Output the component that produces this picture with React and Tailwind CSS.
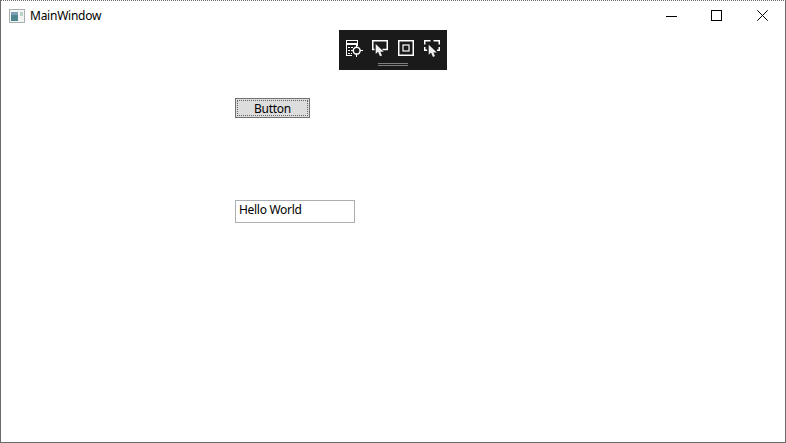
import React from "react";

function DocIcon() {
  return (
    <svg width="18" height="18" viewBox="0 0 18 18" fill="none" stroke="#fff" strokeWidth="1" shapeRendering="crispEdges">
      <path d="M0.5 15V0.5H11.5V6" />
      <path d="M0 3.5H12" strokeWidth="2" />
      <path d="M0 15.5H6" />
      <path d="M2 7.5H4M5 7.5H7M2 10.5H4M2 13.5H4M5 13.5H6" />
      <circle cx="10.7" cy="10.7" r="3.4" shapeRendering="auto" strokeWidth="1.5" />
      <path d="M10.5 5V8M10.5 13.5V16.5M5 10.5H8M13.5 10.5H16.5" strokeWidth="1.2" />
    </svg>
  );
}

function ScreenCursorIcon() {
  return (
    <svg width="18" height="18" viewBox="0 0 18 18" fill="none">
      <path d="M2.5 9.5H0.75V0.75H15.25V9.5H10.5" stroke="#fff" strokeWidth="1.5" />
      <path d="M3.7 4V14L6 11.8L8 16.3L10 15.4L8.3 11.8L11.8 11.8Z" fill="#f0f0f0" />
    </svg>
  );
}

function SquareIcon() {
  return (
    <svg width="18" height="18" viewBox="0 0 18 18" fill="none" stroke="#fff">
      <rect x="0.75" y="0.75" width="14.5" height="14.5" strokeWidth="1.5" />
      <rect x="5" y="5" width="6" height="6" strokeWidth="1.2" />
    </svg>
  );
}

function BracketCursorIcon() {
  return (
    <svg width="18" height="18" viewBox="0 0 18 18" fill="none">
      <path d="M0.75 4.5V0.75H6.5M9.5 0.75H15.25V4.5M0.75 7V10.25H3.2M13 10.25H15.25V7" stroke="#fff" strokeWidth="1.5" />
      <path d="M4.7 4.7V14.7L7 12.5L9 17L11 16.1L9.3 12.5L12.8 12.5Z" fill="#f0f0f0" />
    </svg>
  );
}

export default function App() {
  return (
    <div className="relative flex h-[443px] w-[786px] flex-col border border-[#6a6a6a] [border-top-style:dotted] bg-white font-['Noto_Sans','Open_Sans',sans-serif] text-[12px] text-black">
      <header className="flex h-[29px] shrink-0 items-center">
        <svg className="ml-[8px]" width="16" height="14" viewBox="0 0 16 14">
          <rect x="0.5" y="0.5" width="15" height="13" fill="#f2f4f4" stroke="#a9b0b3" />
          <rect x="2" y="3" width="7" height="9" fill="#4f8791" />
          <rect x="2" y="3" width="7" height="3" fill="#7d9fb5" />
          <rect x="11" y="3" width="3" height="4" fill="#b9d3c9" />
        </svg>
        <span className="ml-[5px] leading-none tracking-[-0.25px]">MainWindow</span>
        <div className="ml-auto flex">
          <button className="flex h-[29px] w-[45px] items-center justify-center">
            <span className="mt-px h-px w-[11px] bg-black" />
          </button>
          <button className="flex h-[29px] w-[45px] items-center justify-center">
            <span className="h-[11px] w-[11px] border border-black" />
          </button>
          <button className="ml-px flex h-[29px] w-[45px] items-center justify-center">
            <svg width="11" height="11" viewBox="0 0 11 11" stroke="#000" strokeWidth="1">
              <path d="M0.3 0.3L10.7 10.7M10.7 0.3L0.3 10.7" />
            </svg>
          </button>
        </div>
      </header>

      <main className="flex flex-col items-start pl-[234px] pt-[68px]">
        <button className="h-[20px] w-[75px] border border-[#707070] bg-[#dddddd] p-px">
          <span className="flex h-full w-full items-center justify-center border border-dotted border-[#666666] pt-px leading-none tracking-[-0.3px]">
            Button
          </span>
        </button>
        <div className="mt-[82px] flex h-[23px] w-[120px] items-center border border-[#abadb3] bg-white pb-[3px] pl-[3px] leading-none tracking-[-0.3px]">
          Hello World
        </div>
      </main>

      <div className="absolute left-[338px] top-[29px] flex h-[40px] w-[108px] flex-col items-center bg-[#1a1a1a]">
        <div className="flex w-full gap-[8px] pl-[7px] pt-[10px]">
          <DocIcon />
          <ScreenCursorIcon />
          <SquareIcon />
          <BracketCursorIcon />
        </div>
        <div className="mt-[5px] h-[3px] w-[30px] border-y border-[#7f7f7f]" />
      </div>
    </div>
  );
}
